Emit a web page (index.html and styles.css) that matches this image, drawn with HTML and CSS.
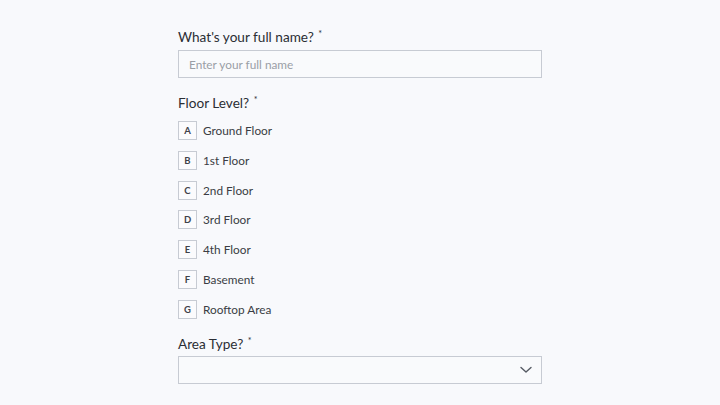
FILE: index.html
```html
<!DOCTYPE html>
<html>
<head>
<meta charset="utf-8">
<link rel="stylesheet" href="styles.css">
</head>
<body>
<div class="form">
  <div class="field">
    <div class="label">What's your full name? <span class="req">*</span></div>
    <div class="input"><span class="placeholder">Enter your full name</span></div>
  </div>
  <div class="field">
    <div class="label">Floor Level? <span class="req">*</span></div>
    <div class="options">
      <div class="option"><span class="key">A</span><span class="text">Ground Floor</span></div>
      <div class="option"><span class="key">B</span><span class="text">1st Floor</span></div>
      <div class="option"><span class="key">C</span><span class="text">2nd Floor</span></div>
      <div class="option"><span class="key">D</span><span class="text">3rd Floor</span></div>
      <div class="option"><span class="key">E</span><span class="text">4th Floor</span></div>
      <div class="option"><span class="key">F</span><span class="text">Basement</span></div>
      <div class="option"><span class="key">G</span><span class="text">Rooftop Area</span></div>
    </div>
  </div>
  <div class="field">
    <div class="label">Area Type? <span class="req">*</span></div>
    <div class="select">
      <svg class="chev" width="12" height="8" viewBox="0 0 12 8"><path d="M1 1.5 L6 6 L11 1.5" fill="none" stroke="#555a63" stroke-width="1.4" stroke-linecap="round" stroke-linejoin="round"/></svg>
    </div>
  </div>
</div>
</body>
</html>
```

FILE: styles.css
```css
html, body {
  margin: 0;
  padding: 0;
  background: #f8f9fc;
}
body {
  font-family: "Lato", "Open Sans", sans-serif;
  color: #2f3238;
}
.form {
  width: 364px;
  margin: 0 auto;
  padding-top: 27px;
  display: flex;
  flex-direction: column;
  gap: 15px;
}
.field {
  display: flex;
  flex-direction: column;
}
.label {
  font-size: 13.6px;
  line-height: 20px;
  height: 20px;
  color: #2b2e34;
}
.req {
  font-size: 9px;
  vertical-align: top;
  position: relative;
  top: -3px;
  margin-left: 1px;
}
.input, .select {
  margin-top: 3px;
  height: 28px;
  box-sizing: border-box;
  border: 1px solid #c7cbd3;
  background: #f9fafc;
  display: flex;
  align-items: center;
}
.placeholder {
  font-size: 11.8px;
  color: #9a9ea6;
  padding-left: 10px;
}
.options {
  margin-top: 8px;
  display: flex;
  flex-direction: column;
  gap: 10.75px;
}
.option {
  display: flex;
  align-items: center;
  height: 19px;
}
.key {
  width: 19px;
  height: 19px;
  box-sizing: border-box;
  border: 1px solid #c7cbd3;
  background: #fbfbfd;
  font-size: 9.5px;
  font-weight: 700;
  color: #3f424a;
  display: flex;
  align-items: center;
  justify-content: center;
}
.text {
  font-size: 11.8px;
  margin-left: 6px;
  color: #3a3d44;
}
.select {
  margin-top: 2px;
  justify-content: flex-end;
  padding-right: 9px;
}
.chev {
  display: block;
}
```
